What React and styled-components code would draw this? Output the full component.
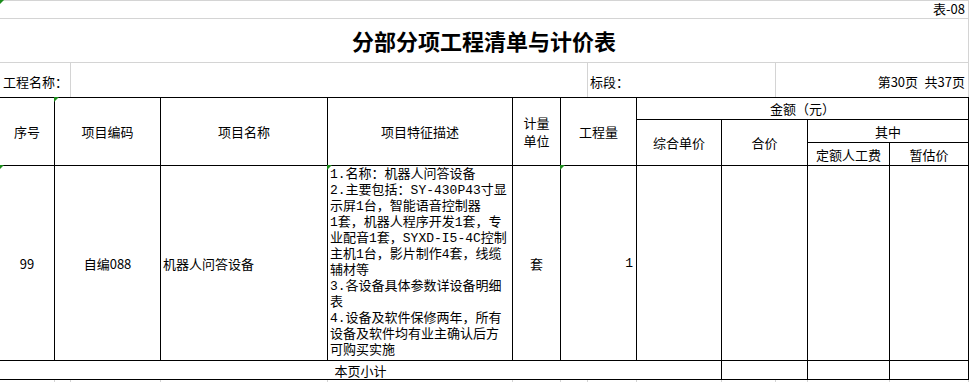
import React from 'react'
import styled, { createGlobalStyle } from 'styled-components'

const GlobalStyle = createGlobalStyle`
  html, body {
    margin: 0;
    padding: 0;
    background: #fff;
  }
  body {
    font-family: 'Noto Sans CJK SC', 'Liberation Sans', sans-serif;
    font-size: 13px;
    color: #000;
  }
`

const Sheet = styled.div`
  width: 969px;
`

// light excel gridlines above the bordered table
const TopGrid = styled.div`
  display: grid;
  grid-template-columns: 70px 516px 187px 192px;
  grid-template-rows: 17px 43px 34px;
  gap: 1px;
  padding: 1px 1px 0 0;
  background: #d4d4d4;
`

const TopCell = styled.div`
  position: relative;
  background: #fff;
  display: flex;
  align-items: ${p => p.$valign || 'flex-end'};
  justify-content: ${p => p.$align || 'flex-start'};
  padding: ${p => p.$pad || '0 3px 1px 3px'};
  grid-column: ${p => p.$col || 'auto'};
  white-space: pre;
  line-height: 16px;
`

const Title = styled.h1`
  margin: 0;
  font-size: 22px;
  font-weight: 700;
  line-height: 24px;
`

const Table = styled.div`
  display: grid;
  grid-template-columns: 54px 105px 166px 184px 47px 75px 84px 85px 81px 78px;
  grid-template-rows: 21px 22px 22px 194px 18px;
  gap: 1px;
  padding: 1px 1px 1px 0;
  background: #000;
`

const Cell = styled.div`
  position: relative;
  background: #fff;
  display: flex;
  flex-direction: column;
  align-items: ${p => p.$align || 'center'};
  justify-content: center;
  padding: ${p => p.$pad || '0'};
  grid-column: ${p => p.$col};
  grid-row: ${p => p.$row};
  line-height: 17px;
  white-space: nowrap;
`

const UnitLine = styled.div`
  line-height: 18px;
`

const Mono = styled.span`
  font-family: 'Liberation Mono', 'Noto Sans CJK SC', monospace;
`

const DescCell = styled.div`
  position: relative;
  background: #fff;
  grid-column: 4;
  grid-row: 4;
  padding: 1px 0 0 2px;
  font-family: 'Liberation Mono', 'Noto Sans CJK SC', monospace;
  font-size: 13px;
`

const DescLine = styled.div`
  height: 16px;
  line-height: 16px;
  white-space: nowrap;
`

const Flag = styled.span`
  position: absolute;
  top: -1px;
  left: -1px;
  width: 0;
  height: 0;
  border-top: 5px solid #1c8c1c;
  border-right: 5px solid transparent;
`

const Tail = styled.div`
  display: grid;
  grid-template-columns: 54px 15px 89px 166px 184px 47px 26px 48px 84px 53px 31px 81px 78px;
  height: 3px;
  gap: 1px;
  padding-right: 1px;
  background: #d4d4d4;

  & > span {
    background: #fff;
  }
`

const desc = [
  '1.名称：机器人问答设备',
  '2.主要包括：SY-430P43寸显',
  '示屏1台，智能语音控制器',
  '1套，机器人程序开发1套，专',
  '业配音1套，SYXD-I5-4C控制',
  '主机1台，影片制作4套，线缆',
  '辅材等',
  '3.各设备具体参数详设备明细',
  '表',
  '4.设备及软件保修两年，所有',
  '设备及软件均有业主确认后方',
  '可购买实施',
]

export default function App() {
  return (
    <Sheet>
      <GlobalStyle />
      <TopGrid>
        <TopCell $col="1 / -1" $align="flex-end">
          <Flag />
          表-08
        </TopCell>
        <TopCell $col="1 / -1" $align="center" $valign="center" $pad="0 0 1px 0">
          <Title>分部分项工程清单与计价表</Title>
        </TopCell>
        <TopCell $valign="center" $pad="3px 0 0 3px">工程名称：</TopCell>
        <TopCell />
        <TopCell $valign="center" $pad="3px 0 0 2px">标段：</TopCell>
        <TopCell $valign="center" $align="flex-end" $pad="3px 3px 0 0">{'第30页\u2002共37页'}</TopCell>
      </TopGrid>

      <Table>
        <Cell $col="1" $row="1 / 4">序号</Cell>
        <Cell $col="2" $row="1 / 4"><Flag />项目编码</Cell>
        <Cell $col="3" $row="1 / 4">项目名称</Cell>
        <Cell $col="4" $row="1 / 4">项目特征描述</Cell>
        <Cell $col="5" $row="1 / 4">
          <UnitLine>计量</UnitLine>
          <UnitLine>单位</UnitLine>
        </Cell>
        <Cell $col="6" $row="1 / 4">工程量</Cell>
        <Cell $col="7 / 11" $row="1">金额（元）</Cell>
        <Cell $col="7" $row="2 / 4">综合单价</Cell>
        <Cell $col="8" $row="2 / 4">合价</Cell>
        <Cell $col="9 / 11" $row="2">其中</Cell>
        <Cell $col="9" $row="3">定额人工费</Cell>
        <Cell $col="10" $row="3">暂估价</Cell>

        <Cell $col="1" $row="4"><Flag />99</Cell>
        <Cell $col="2" $row="4">自编088</Cell>
        <Cell $col="3" $row="4" $align="flex-start" $pad="0 0 0 2px">机器人问答设备</Cell>
        <DescCell>
          <Flag />
          {desc.map((line, i) => (
            <DescLine key={i}>{line}</DescLine>
          ))}
        </DescCell>
        <Cell $col="5" $row="4">套</Cell>
        <Cell $col="6" $row="4" $align="flex-end" $pad="0 3px 0 0"><Flag /><Mono>1</Mono></Cell>
        <Cell $col="7" $row="4" />
        <Cell $col="8" $row="4" />
        <Cell $col="9" $row="4" />
        <Cell $col="10" $row="4" />

        <Cell $col="1 / 8" $row="5">本页小计</Cell>
        <Cell $col="8" $row="5" />
        <Cell $col="9" $row="5" />
        <Cell $col="10" $row="5" />
      </Table>

      <Tail>
        {Array.from({ length: 13 }).map((_, i) => (
          <span key={i} />
        ))}
      </Tail>
    </Sheet>
  )
}
